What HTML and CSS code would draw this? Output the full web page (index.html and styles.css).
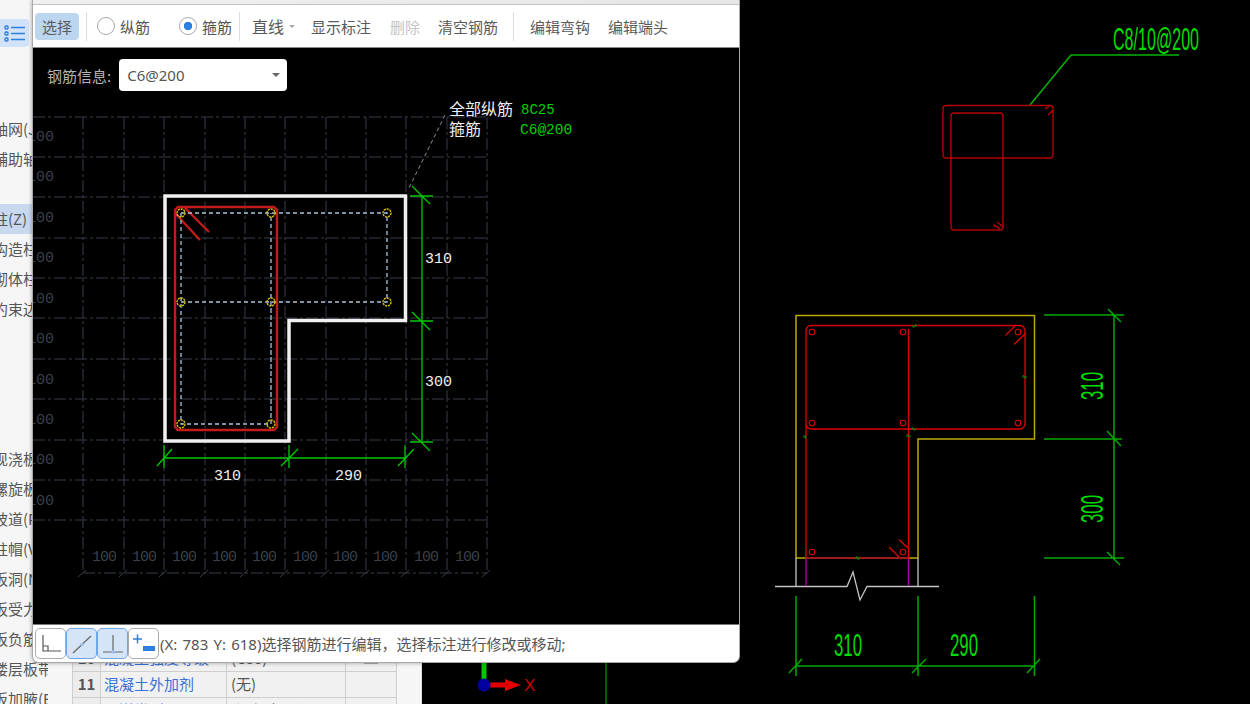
FILE: index.html
```html
<!DOCTYPE html>
<html lang="zh">
<head>
<meta charset="utf-8">
<title>钢筋编辑</title>
<link rel="stylesheet" href="styles.css">
</head>
<body>
<div class="page">
  <aside class="panel">
    <nav class="nav">
      <div class="nav-icon">
        <svg width="22" height="20" viewBox="0 0 22 20"><g fill="none" stroke="#2f7fe0" stroke-width="1.4"><rect x="1" y="3" width="3" height="3" rx="1"/><rect x="1" y="9" width="3" height="3" rx="1"/><rect x="1" y="15" width="3" height="3" rx="1"/><path d="M7 4.500h14M7 10.500h14M7 16.500h14"/></g></svg>
      </div>
      <ul class="nav-group first">
        <li>轴网(J)</li>
        <li>辅助轴线</li>
      </ul>
      <ul class="nav-group second">
        <li class="active">柱(Z)</li>
        <li>构造柱</li>
        <li>砌体柱</li>
        <li>约束边缘</li>
      </ul>
      <ul class="nav-group third">
        <li>现浇板</li>
        <li>螺旋板</li>
        <li>坡道(P)</li>
        <li>柱帽(V)</li>
        <li>板洞(N)</li>
        <li>板受力筋</li>
        <li>板负筋</li>
        <li>楼层板带</li>
        <li>板加腋(E)</li>
      </ul>
    </nav>
    <div class="table-wrap">
      <table class="props">
        <tr><td class="num">10</td><td class="name">混凝土强度等级</td><td class="val">(C30)</td><td class="chk"><span class="box"></span></td><td></td></tr>
        <tr><td class="num">11</td><td class="name">混凝土外加剂</td><td class="val">(无)</td><td class="chk"></td><td></td></tr>
        <tr><td class="num">12</td><td class="name">泵送类型</td><td class="val">(混凝土泵)</td><td class="chk"></td><td></td></tr>
      </table>
    </div>
  </aside>

  <main class="cad">
    <svg class="cad-svg" viewBox="422 0 828 704" width="828" height="704">
      <!-- axis marker -->
      <path class="axis-line" d="M606 655V704"/>
      <path class="axis-y" d="M484 655V680"/>
      <path class="axis-x" d="M490 685H506"/>
      <polygon class="axis-head" points="505,679 521,685 505,691"/>
      <circle class="axis-o" cx="484" cy="685" r="6.5"/>
      <text class="axis-t" x="524" y="691">X</text>

      <!-- stirrup detail -->
      <text class="big" x="1113" y="50" textLength="86" lengthAdjust="spacingAndGlyphs">C8/10@200</text>
      <path class="leader" d="M1030 105L1071 55H1179"/>
      <rect class="st" x="943" y="105.500" width="110" height="52.500" rx="3"/>
      <rect class="st" x="951" y="113" width="52" height="117" rx="3"/>
      <path class="st" d="M1045 109q2-2 4-2M1048 115l5-5M993 225q4 1 7 4M997 222q3 2 6 5"/>

      <!-- section -->
      <path class="yl" d="M796 558V315.500H1034.500V439H918V558Z"/>
      <rect class="rd" x="806" y="325.500" width="219" height="103.500" rx="5"/>
      <path class="rd" d="M806 425V558H908.500V329M1005.500 335.500L1016 325M1014 344.500L1026 333M889 547L899 557M899 539.500L908 548"/>
      <path class="rd-dk" d="M806 558H908"/>
      <g class="dot">
        <circle cx="812" cy="332" r="2.800"/><circle cx="903" cy="332" r="2.800"/><circle cx="1018" cy="332" r="2.800"/>
        <circle cx="812" cy="423" r="2.800"/><circle cx="903" cy="423" r="2.800"/><circle cx="1018" cy="423" r="2.800"/>
        <circle cx="812" cy="552" r="2.800"/><circle cx="903" cy="552" r="2.800"/>
      </g>
      <path class="mk" d="M912 326h5M913 328l3-4M1022 377h5M1023 375l3 4M911 429h5M912 427l3 4M803 437h4M804 435l2 4M906 436h5M907 434l3 4M855 558h5M856 556l3 4"/>
      <path class="gy" d="M796 558V586M918 558V586M775 586.500H847L853 572L860 600L867 586.500H939"/>
      <path class="mg" d="M806 559V586M908.500 559V586"/>
      <path class="dm" d="M1044 315H1124M1044 439H1122M1044 558H1124M1114 315V558M1108 309L1121 322M1107 431L1121 446M1107 552L1120 565M796 596V676M918 596V676M1034.500 596V676M796 666H1034M789 673L802 659M912 673L926 659M1027 673L1040 659"/>
      <text class="big" x="834" y="656" textLength="28" lengthAdjust="spacingAndGlyphs">310</text>
      <text class="big" x="950" y="656" textLength="28" lengthAdjust="spacingAndGlyphs">290</text>
      <text class="big" transform="translate(1103 400) rotate(-90)" textLength="28" lengthAdjust="spacingAndGlyphs">310</text>
      <text class="big" transform="translate(1103 523) rotate(-90)" textLength="28" lengthAdjust="spacingAndGlyphs">300</text>
    </svg>
  </main>

  <section class="dialog">
    <div class="title-strip"></div>
    <header class="toolbar">
      <button class="tool select-btn">选择</button>
      <span class="divider d1"></span>
      <label class="radio r1"><span class="dot-radio"></span>纵筋</label>
      <label class="radio r2"><span class="dot-radio on"></span>箍筋</label>
      <span class="divider d2"></span>
      <span class="tool line-select">直线<i class="caret small"></i></span>
      <span class="tool show">显示标注</span>
      <span class="tool del">删除</span>
      <span class="tool clear">清空钢筋</span>
      <span class="divider d3"></span>
      <span class="tool hook">编辑弯钩</span>
      <span class="tool end">编辑端头</span>
    </header>
    <div class="canvas">
      <svg class="canvas-svg" viewBox="33 48 706 576" width="706" height="576">
        <g class="grid">
          <path d="M33 117H487M33 157H487M33 197H487M33 238H487M33 278H487M33 318H487M33 359H487M33 399H487M33 440H487M33 480H487M33 520H487M83 573H487"/>
          <path d="M83 117V573M124 117V573M164 117V573M205 117V573M245 117V573M285 117V573M326 117V573M366 117V573M406 117V573M447 117V573M487 117V573"/>
          <path class="solid" d="M78 577L86 570M119 577L127 570M159 577L167 570M200 577L208 570M240 577L248 570M280 577L288 570M321 577L329 570M361 577L369 570M401 577L409 570M442 577L450 570M482 577L490 570"/>
        </g>
        <g class="grid-t">
          <text x="92" y="561">100</text><text x="132" y="561">100</text><text x="172" y="561">100</text><text x="212" y="561">100</text><text x="252" y="561">100</text><text x="293" y="561">100</text><text x="333" y="561">100</text><text x="373" y="561">100</text><text x="414" y="561">100</text><text x="455" y="561">100</text>
        </g>
        <g class="grid-t side">
          <text x="27" y="141">100</text><text x="27" y="181">100</text><text x="27" y="222">100</text><text x="27" y="262">100</text><text x="27" y="303">100</text><text x="27" y="343">100</text><text x="27" y="384">100</text><text x="27" y="424">100</text><text x="27" y="464">100</text><text x="27" y="505">100</text>
        </g>
        <path class="lead-w" d="M445 115L408 190"/>
        <path class="outline" d="M165 196H405.500V320.500H289V441H165Z"/>
        <path class="red" d="M178 207H274L277 210V427L274 430H178L175 427V210ZM185 208L209 232M175 213L200 240"/>
        <path class="bar" d="M181 213H387V302H181M181 213V424H271V213M271 302V424"/>
        <g class="ring">
          <circle cx="181" cy="213" r="4"/><circle cx="271" cy="213" r="4"/><circle cx="387" cy="213" r="4"/>
          <circle cx="181" cy="302" r="4"/><circle cx="271" cy="302" r="4"/><circle cx="387" cy="302" r="4"/>
          <circle cx="181" cy="424" r="4"/><circle cx="271" cy="424" r="4"/>
        </g>
        <path class="dim" d="M422 196V441M410 196H433M410 321H433M410 442H433M412 186L430 204M412 312L430 330M412 433L430 451M164 458H405M164 445V468M289 445V468M405 445V468M157 466L172 449M281 466L298 449M398 466L414 449"/>
        <text class="lbl" x="214" y="480">310</text>
        <text class="lbl" x="335" y="480">290</text>
        <text class="lbl" x="425" y="263">310</text>
        <text class="lbl" x="425" y="386">300</text>
        <text class="note" x="449" y="115">全部纵筋</text>
        <text class="note" x="449" y="135">箍筋</text>
        <text class="note-g" x="521" y="114">8C25</text>
        <text class="note-g wide" x="520" y="134">C6@200</text>
      </svg>
      <div class="info">
        <span class="info-label">钢筋信息:</span>
        <span class="info-select">C6@200<i class="caret"></i></span>
      </div>
    </div>
    <footer class="statusbar">
      <button class="snap">
        <svg width="22" height="22" viewBox="0 0 22 22"><path d="M3 2V18H21M3 13H8V18" fill="none" stroke="#555" stroke-width="1.200"/></svg>
      </button>
      <button class="snap on">
        <svg width="22" height="22" viewBox="0 0 22 22"><path d="M2 20L20 3" stroke="#666" stroke-width="1.200"/><circle cx="11" cy="11.500" r="1.800" fill="#9cc0ea"/></svg>
      </button>
      <button class="snap on">
        <svg width="22" height="22" viewBox="0 0 22 22"><path d="M11 2V19M1 19H21" stroke="#666" stroke-width="1.200" fill="none"/><circle cx="11" cy="19" r="1.800" fill="#9cc0ea"/></svg>
      </button>
      <button class="snap">
        <svg width="24" height="22" viewBox="0 0 24 22"><path d="M1 6H10M5.500 1.500V10.500" stroke="#2f7fe0" stroke-width="1.500"/><rect x="11" y="13" width="12" height="5" fill="#2f7fe0"/></svg>
      </button>
      <span class="status-text">(X: 783 Y: 618)选择钢筋进行编辑，选择标注进行修改或移动;</span>
    </footer>
  </section>
</div>
</body>
</html>
```

FILE: styles.css
```css
* { box-sizing: border-box; }
html, body { margin: 0; padding: 0; height: 100%; overflow: hidden; background: #000; }
body { font-family: "Noto Sans CJK SC", "Noto Sans", sans-serif; }

.page { position: relative; display: flex; width: 1250px; height: 704px; overflow: hidden; }

/* left panel */
.panel { display: flex; width: 422px; height: 704px; flex: none; background: #f6f6f6; border-right: 1px solid #dcdcdc; overflow: hidden; }
.nav { width: 72px; flex: none; padding-top: 19px; overflow: hidden; }
.nav-icon { width: 29px; height: 28px; display: flex; align-items: center; justify-content: center; background: #d2e2f9; border-radius: 0 4px 4px 0; }
.nav-group { list-style: none; margin: 0; padding: 0; font-size: 15px; color: #555; }
.nav-group li { height: 30px; line-height: 30px; margin-left: -7px; white-space: nowrap; width: 55px; overflow: hidden; }
.nav-group li.active { background: #c8d8ee; }
.first { margin-top: 67px !important; }
.second { margin-top: 30px !important; }
.third { margin-top: 120px !important; }

.table-wrap { flex: none; width: 324px; padding-top: 645px; }
.props { border-collapse: collapse; table-layout: fixed; width: 324px; background: #f1f1f1; font-size: 15px; color: #555; }
.props td { height: 26px; padding: 0 4px 2px; border: 1px solid #cfcfcf; white-space: nowrap; overflow: hidden; }
.props td:first-child { width: 28px; }
.num { text-align: center; font-weight: 700; background: #ececec; color: #555; }
.props td.num { padding: 0 0 2px; }
.props td.name { width: 126px; padding-left: 3px; color: #3a70d8; }
.val { width: 119px; }
.chk { width: 51px; text-align: center; }
.box { display: inline-block; width: 16px; height: 16px; border: 1px solid #aaa; border-radius: 2px; }

/* CAD area */
.cad { flex: 1; background: #000; }
.cad-svg { display: block; }
.axis-line { stroke: #008000; stroke-width: 1.500; fill: none; }
.axis-y { stroke: #00c800; stroke-width: 5; fill: none; }
.axis-x { stroke: #e00000; stroke-width: 5; fill: none; }
.axis-head { fill: #e00000; }
.axis-o { fill: #0000a0; }
.axis-t { fill: #c80000; font: 17px "Liberation Sans", sans-serif; }
.big { fill: #00dc00; font: 32px "Liberation Sans", sans-serif; }
.leader { fill: none; stroke: #00b400; stroke-width: 1.500; }
.st { fill: none; stroke: #b40000; stroke-width: 1.400; }
.yl { fill: none; stroke: #c0a800; stroke-width: 1.500; }
.rd { fill: none; stroke: #d80000; stroke-width: 1.400; }
.rd-dk { stroke: #a01818; stroke-width: 2; fill: none; }
.dot circle { fill: none; stroke: #d80000; stroke-width: 1.100; }
.mk { stroke: #0a8a0a; stroke-width: 1; fill: none; }
.gy { stroke: #c4c4c4; stroke-width: 1.300; fill: none; }
.mg { stroke: #b000b0; stroke-width: 1.300; fill: none; }
.dm { stroke: #00a800; stroke-width: 1.500; fill: none; }

/* dialog */
.dialog { position: absolute; left: 32px; top: 0; width: 708px; height: 663px; display: flex; flex-direction: column; background: #fff; border: 1px solid #a8a8a8; border-top: 0; border-radius: 0 0 7px 7px; box-shadow: 0 0 4px rgba(0,0,0,.35); overflow: hidden; }
.title-strip { height: 5px; flex: none; background: linear-gradient(90deg, #f0f0ee, #e6e6e4); border-bottom: 1px solid #c4c4c8; }
.toolbar { height: 43px; flex: none; display: flex; align-items: center; background: #fff; border-bottom: 1px solid #8a8a8a; font-size: 15px; color: #5a5a5a; white-space: nowrap; }
.tool { font: inherit; color: inherit; }
.select-btn { width: 44px; height: 27px; margin-left: 2px; padding: 0; border: 0; border-radius: 4px; background: #bcd6f0; color: #5a5a5a; }
.divider { width: 1px; height: 29px; background: #dcdcdc; flex: none; }
.d1 { margin-left: 7px; }
.radio { display: flex; align-items: center; gap: 5px; color: #555; }
.r1 { margin-left: 10px; }
.r2 { margin-left: 29px; }
.dot-radio { width: 18px; height: 18px; border-radius: 50%; border: 1.500px solid #aaa; background: #fff; flex: none; }
.dot-radio.on { background: radial-gradient(circle, #2f7fe0 0 4px, #fff 4.500px); }
.d2 { margin-left: 7px; }
.line-select { margin-left: 12px; width: 59px; display: flex; align-items: center; font-size: 16px; }
.del { margin-left: 19px; color: #c4c4c4; }
.clear { margin-left: 18px; }
.d3 { margin-left: 15px; }
.hook { margin-left: 16px; }
.end { margin-left: 18px; }
.caret { display: inline-block; width: 0; height: 0; border: 4px solid transparent; border-top: 4px solid #666; border-bottom: 0; }
.caret.small { margin-left: 5px; border-top-color: #aaa; border-width: 3px; border-bottom: 0; }

.canvas { position: relative; flex: 1; background: #000; overflow: hidden; }
.canvas-svg { position: absolute; left: 0; top: 0; display: block; }
.info { position: relative; display: flex; align-items: center; gap: 8px; padding: 11px 0 0 14px; }
.info-label { font-size: 15px; color: #b4b4b4; }
.info-select { width: 168px; height: 32px; padding: 0 7px 0 8px; display: flex; align-items: center; justify-content: space-between; background: #fff; border-radius: 4px; font: 15px "Noto Sans", sans-serif; color: #555; }

.grid path { fill: none; stroke: #363e4b; stroke-width: 1; stroke-dasharray: 12 3 3 3; }
.grid path.solid { stroke-dasharray: none; }
.grid-t text { fill: #3a404c; font: 15px "Liberation Mono", monospace; letter-spacing: -1px; }
.grid-t.side text { letter-spacing: 0; }
.lead-w { stroke: #8a8a8a; stroke-width: 1; stroke-dasharray: 4 3; fill: none; }
.outline { fill: none; stroke: #f0f0f0; stroke-width: 3.500; }
.red { fill: none; stroke: #c41a1a; stroke-width: 2.400; }
.bar { fill: none; stroke: #a8c4dc; stroke-width: 1.300; stroke-dasharray: 4 3; }
.ring circle { fill: none; stroke: #e0c400; stroke-width: 1.300; stroke-dasharray: 2.200 .8; }
.dim { fill: none; stroke: #00c800; stroke-width: 1.300; }
.lbl { fill: #f0f0f0; font: 15px "Liberation Mono", monospace; }
.note { fill: #f0f0f0; font: 16px "Noto Sans CJK SC", sans-serif; }
.note-g { fill: #00d000; font: 14px "Liberation Mono", monospace; }
.note-g.wide { font-size: 14.500px; }

.statusbar { height: 38px; flex: none; display: flex; align-items: center; padding-left: 2px; background: #fff; border-top: 1px solid #777; }
.snap { width: 31px; height: 31px; padding: 0; display: flex; align-items: center; justify-content: center; background: #fff; border: 1px solid #aaa; border-radius: 5px; }
.snap.on { background: #d6e4f8; border: 1px solid #6ea6e8; }
.status-text { margin-left: 1px; font-size: 15px; word-spacing: 1.300px; color: #555; white-space: nowrap; font-family: "Noto Sans", "Noto Sans CJK SC", sans-serif; }
```
